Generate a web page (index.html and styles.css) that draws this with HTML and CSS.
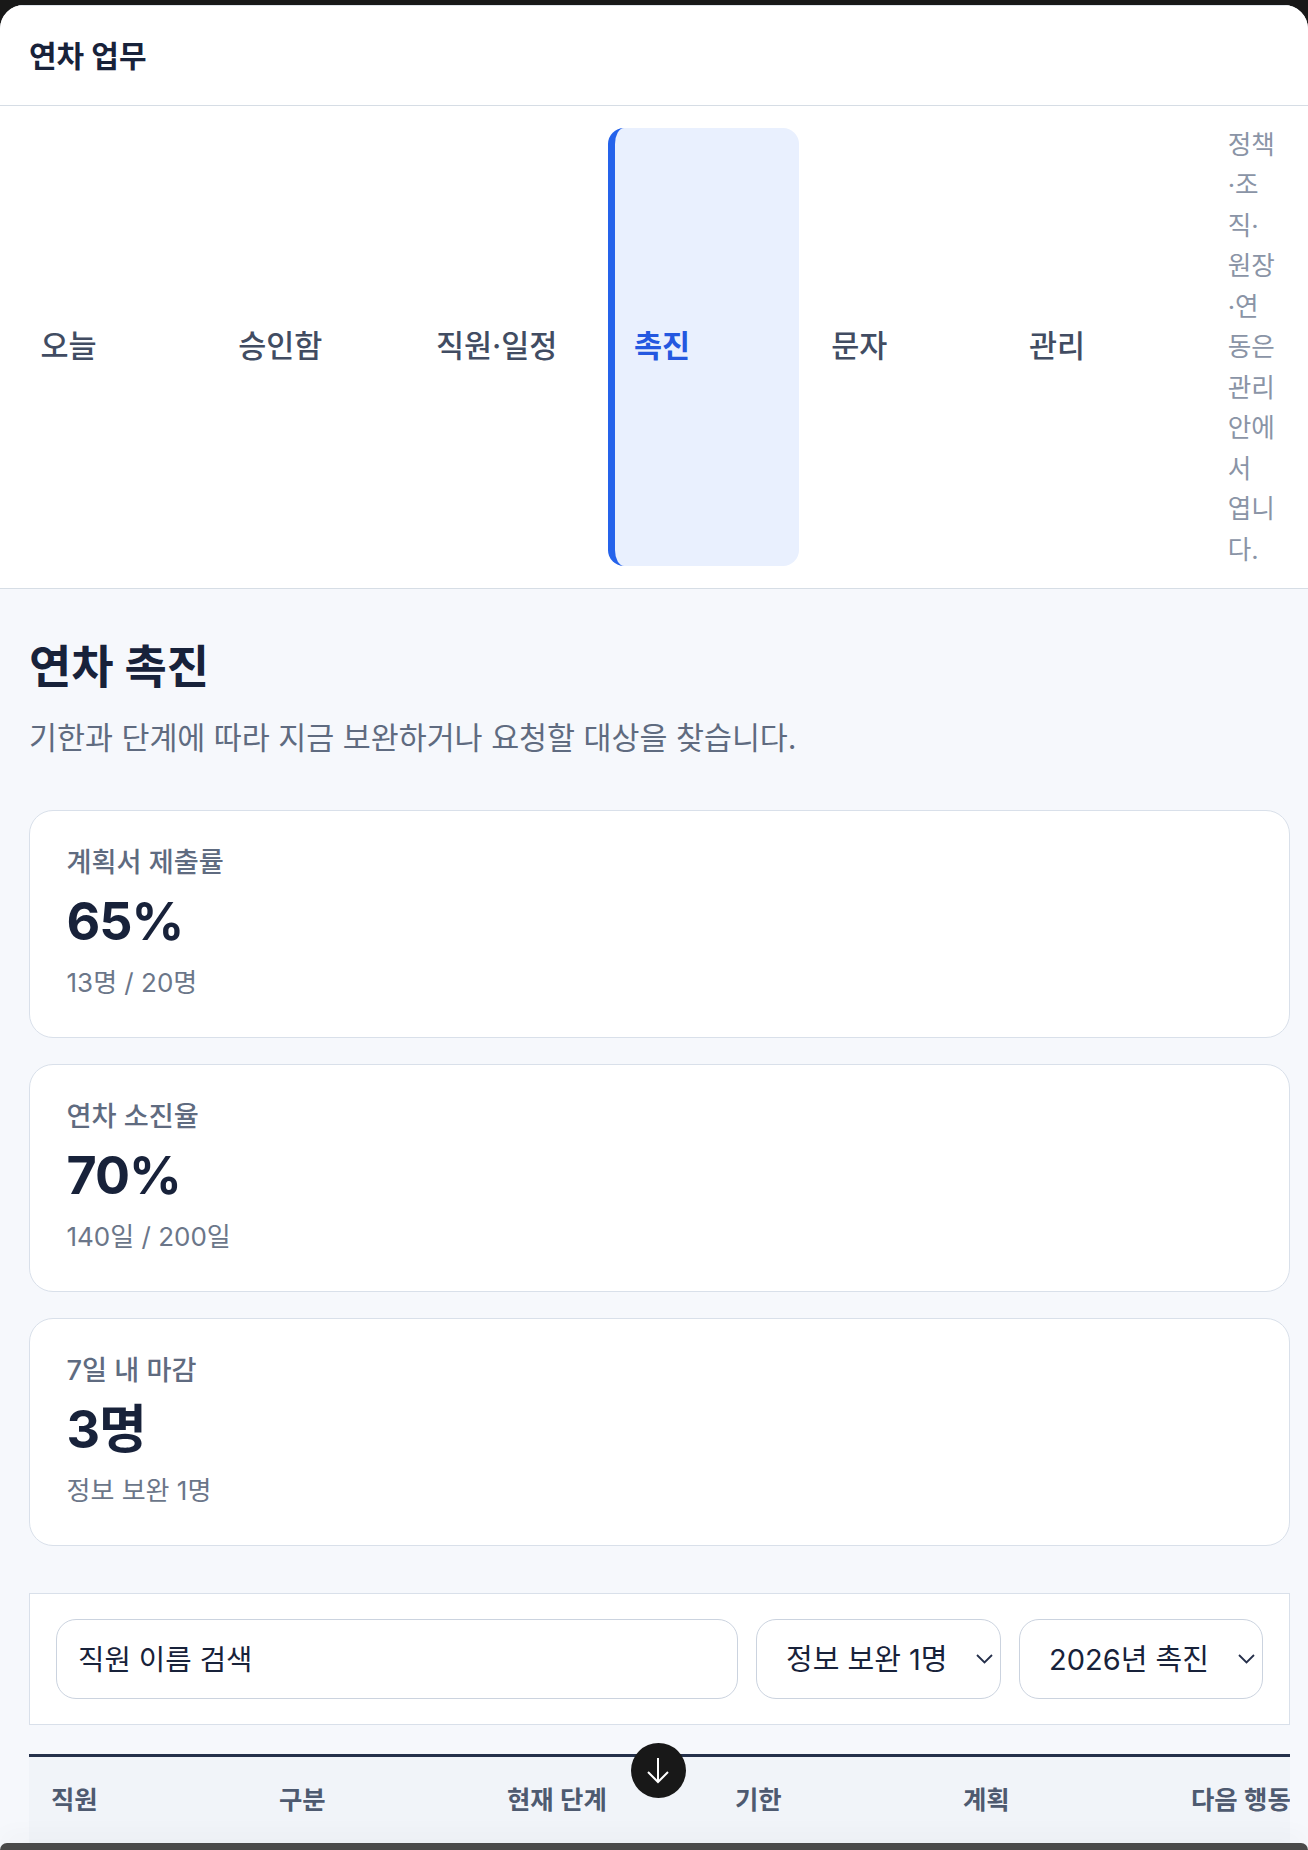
FILE: index.html
```html
<!DOCTYPE html>
<html lang="ko">
<head>
<meta charset="utf-8">
<title>연차 촉진</title>
<link rel="stylesheet" href="styles.css">
</head>
<body>
<div class="sheet">
  <header class="topbar"><strong class="app-title">연차 업무</strong></header>
  <nav class="tabs">
    <a class="tab">오늘</a>
    <a class="tab">승인함</a>
    <a class="tab">직원·일정</a>
    <a class="tab is-active">촉진</a>
    <a class="tab">문자</a>
    <a class="tab">관리</a>
    <p class="tab-note">정책·조직·원장·연동은 관리 안에서 엽니다.</p>
  </nav>
  <main class="content">
    <h1 class="page-title">연차 촉진</h1>
    <p class="page-sub">기한과 단계에 따라 지금 보완하거나 요청할 대상을 찾습니다.</p>
    <section class="stats">
      <article class="stat">
        <div class="stat-label">계획서 제출률</div>
        <div class="stat-value">65%</div>
        <div class="stat-sub">13명 / 20명</div>
      </article>
      <article class="stat">
        <div class="stat-label">연차 소진율</div>
        <div class="stat-value">70%</div>
        <div class="stat-sub">140일 / 200일</div>
      </article>
      <article class="stat">
        <div class="stat-label">7일 내 마감</div>
        <div class="stat-value">3명</div>
        <div class="stat-sub">정보 보완 1명</div>
      </article>
    </section>
    <section class="filters">
      <input class="search" type="text" placeholder="직원 이름 검색">
      <div class="select select-a">
        <select><option>정보 보완 1명</option></select>
        <svg class="chev" viewBox="0 0 17 10" width="17" height="10"><path d="M1 1l7.5 7.5L16 1" fill="none" stroke="#252f4a" stroke-width="1.8"/></svg>
      </div>
      <div class="select select-b">
        <select><option>2026년 촉진</option></select>
        <svg class="chev" viewBox="0 0 17 10" width="17" height="10"><path d="M1 1l7.5 7.5L16 1" fill="none" stroke="#252f4a" stroke-width="1.8"/></svg>
      </div>
    </section>
    <section class="table-wrap">
      <div class="thead">
        <span>직원</span><span>구분</span><span>현재 단계</span><span>기한</span><span>계획</span><span>다음 행동</span>
      </div>
    </section>
  </main>
</div>
<button class="scroll-down" type="button" aria-label="아래로">
  <svg viewBox="0 0 24 27" width="24" height="27"><path d="M12 1v24M2 15l10 10 10-10" fill="none" stroke="#fff" stroke-width="2"/></svg>
</button>
<div class="dock"></div>
</body>
</html>
```
FILE: styles.css
```css
* { box-sizing: border-box; }
html, body { margin: 0; height: 1850px; overflow: hidden; }
body {
  background: #181818;
  font-family: Inter, "Noto Sans CJK KR", sans-serif;
  color: #18223a;
  padding-top: 5px;
}
.sheet {
  background: #f6f8fc;
  border-radius: 24px 24px 0 0;
  overflow: hidden;
  height: 1845px;
}
.topbar {
  height: 101px;
  background: #fff;
  border-top: 1px solid #dfe5ec;
  border-bottom: 1px solid #d6dde5;
  display: flex;
  align-items: center;
  padding: 0 29px 4px;
}
.app-title { font-size: 30px; font-weight: 700; }
.tabs {
  display: flex;
  gap: 6.7px;
  background: #fff;
  border-bottom: 1px solid #d6dde5;
  padding: 18px 15px 19px;
}
.tab {
  flex: 0 0 191px;
  margin: 4px 0 3px;
  padding: 0 0 5px 25.5px;
  display: flex;
  align-items: center;
  font-size: 30.5px;
  font-weight: 500;
  color: #414c62;
  border-radius: 16px;
}
.tab.is-active {
  padding-left: 19px;
  background: #e9f0fe;
  border-left: 7px solid #2563eb;
  color: #2458e0;
  font-weight: 600;
}
.tab-note {
  margin: 1px 0 -1px 26.5px;
  width: 50px;
  font-size: 25.6px;
  line-height: 40.45px;
  color: #8a94a6;
}
.content { padding: 47px 18px 0 29px; }
.page-title {
  margin: 0;
  font-size: 46px;
  line-height: 60px;
  font-weight: 700;
}
.page-sub {
  margin: 17px 0 0;
  font-size: 30.4px;
  line-height: 50px;
  color: #5f6b80;
}
.stats {
  margin-top: 47px;
  display: flex;
  flex-direction: column;
  gap: 25.5px;
}
.stat {
  height: 228.5px;
  background: #fff;
  border: 1px solid #d9e0ea;
  border-radius: 24px;
  padding: 27px 36.5px 0;
}
.stat-label { font-size: 27.2px; line-height: 50px; font-weight: 500; color: #5f6b80; }
.stat-value { margin-top: 1px; font-size: 52px; line-height: 66px; font-weight: 700; letter-spacing: -1px; }
.stat-sub { margin-top: 3px; font-size: 26px; line-height: 50px; color: #6b7689; }
.filters {
  margin-top: 47px;
  height: 132px;
  background: #fff;
  border: 1px solid #d9e0ea;
  padding: 25px 26px;
  display: flex;
  gap: 18px;
}
.search, .select select {
  height: 80px;
  border: 1px solid #cbd3df;
  border-radius: 20px;
  background: #fff;
  font-family: inherit;
  font-size: 29px;
  color: #18223a;
  outline: none;
}
.search { flex: 0 0 682px; padding: 0 0 0 21px; font-size: 28.7px; }
.search::placeholder { color: #18223a; opacity: 1; }
.select { position: relative; }
.select-a { flex: 0 0 245px; }
.select-b { flex: 0 0 244px; }
.select select {
  width: 100%;
  appearance: none;
  padding: 0 0 0 29px;
}
.chev { position: absolute; right: 8px; top: 35px; }
.table-wrap {
  margin-top: 29px;
  overflow: hidden;
  border-top: 3px solid #25314b;
}
.thead {
  display: grid;
  grid-template-columns: repeat(6, 228px);
  width: 1368px;
  background: #f1f4f9;
  padding: 25px 0;
  font-size: 25.4px;
  line-height: 36px;
  font-weight: 600;
  color: #4e5a70;
}
.thead span { padding-left: 22px; }
.scroll-down {
  position: fixed;
  left: 630.5px;
  top: 1743px;
  width: 55px;
  height: 55px;
  border: 0;
  border-radius: 50%;
  background: #181818;
  padding: 0;
  display: flex;
  align-items: center;
  justify-content: center;
}
.dock {
  position: fixed;
  left: 0;
  right: 0;
  bottom: 0;
  height: 7px;
  background: #4a4a4a;
  border-radius: 24px 24px 0 0;
  box-shadow: 0 -4px 24px rgba(0, 0, 0, 0.07);
}
```
